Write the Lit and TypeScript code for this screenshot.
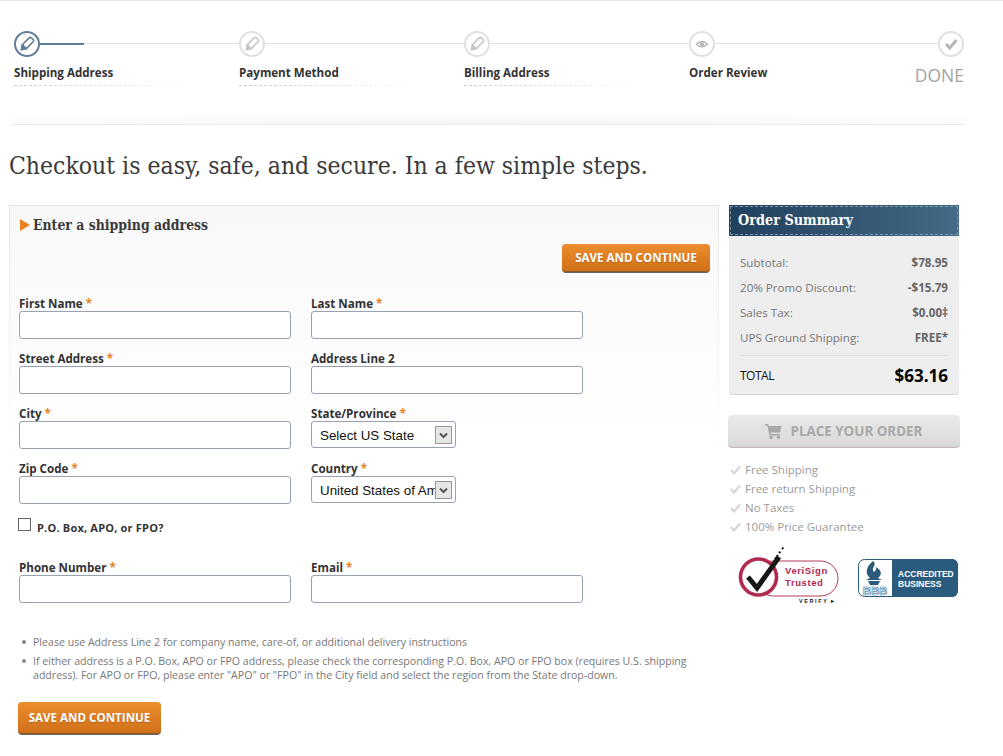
import { LitElement, html, css, svg } from "lit";
import { customElement } from "lit/decorators.js";

const pencil = (c: string) => svg`<g transform="rotate(45 13 13)" fill="none" stroke=${c} stroke-width="1.6">
  <rect x="10.2" y="5.5" width="5.6" height="11.5" rx="1.6"/><path d="M10.2 17 L13 21 L15.8 17 Z" fill=${c}/></g>`;
const eye = (c: string) => svg`<path d="M7.5 13.3 Q13 7.8 18.5 13.3 Q13 18.5 7.5 13.3 Z" fill="none" stroke=${c} stroke-width="1.3"/><circle cx="13" cy="13.2" r="2" fill=${c}/>`;
const checkIcon = (c: string) => svg`<path d="M8 13 L11.7 17 L18.5 9" fill="none" stroke=${c} stroke-width="3"/>`;

@customElement("app-root")
export class AppRoot extends LitElement {
  static styles = css`
    :host { display: block; width: 1003px; height: 756px; overflow: hidden; background: #fff; font-family: "Open Sans", sans-serif; color: #333; }
    .page { border-top: 1px solid #e8e8e8; padding-top: 30px; }
    .steps { display: grid; grid-template-columns: 225px 225px 225px 249px 26px; margin-left: 14px; height: 55px; }
    .step { display: flex; flex-direction: column; min-width: 0; }
    .head { display: flex; align-items: center; height: 26px; }
    .circle { flex: none; display: block; width: 26px; height: 26px; }
    .line { flex: 1; height: 2px; background: linear-gradient(#e0e0e0, #e0e0e0) 0 0 / 100% 1px no-repeat; margin-top: -1px; }
    .line.active { background: linear-gradient(90deg, #5f7d98 0 44px, transparent 44px), linear-gradient(#e0e0e0, #e0e0e0) 0 0 / 100% 1px no-repeat; }
    .label { margin-top: 8px; font-size: 11.6px; font-weight: 700; line-height: 16px; color: #333; white-space: nowrap; }
    .dash { margin-top: 4px; width: 185px; height: 1px; background: repeating-linear-gradient(90deg, #ccc 0 3px, transparent 3px 5px); -webkit-mask-image: linear-gradient(90deg, #000, transparent); mask-image: linear-gradient(90deg, #000, transparent); }
    .last { align-items: flex-end; }
    .done { margin-top: 5px; font-size: 17.5px; line-height: 26px; color: #a3a3a3; white-space: nowrap; }
    .band { margin: 24px 37px 0 11px; height: 14px; border-bottom: 1px solid #ececec; background: radial-gradient(ellipse 70% 100% at 50% 100%, #f5f5f5, #fff); }
    h1 { margin: 25px 0 0 9px; font: 400 24.5px/32px "DejaVu Serif", serif; font-stretch: condensed; color: #3a3a3a; white-space: nowrap; }
    .main { display: grid; grid-template-columns: 710px 230px; gap: 10px; margin: 23px 0 0 9px; }
    .panel { border: 1px solid; border-image: linear-gradient(#e3e3e3, #fff 45%) 1; background: linear-gradient(#f8f8f8, #fff 43%); padding: 9px 8px 0 9px; height: 540px; box-sizing: border-box; }
    h2 { display: flex; align-items: center; gap: 3px; margin: 0 0 0 1px; font: 700 13.9px/20px "DejaVu Serif", serif; font-stretch: condensed; color: #3a3a3a; }
    .tri { width: 0; height: 0; border-left: 10px solid #e8821e; border-top: 6px solid transparent; border-bottom: 6px solid transparent; }
    .bar { display: flex; justify-content: flex-end; margin-top: 9px; margin-bottom: 23px; }
    .btn { display: flex; align-items: center; justify-content: center; box-sizing: border-box; border: 0; padding: 0 0 2px; border-radius: 4px; background: linear-gradient(#ec8d2e, #cf6f18); box-shadow: inset 0 -1px 0 #8a5a2a, 0 1px 0 #666; color: #fff; font: 700 11.6px "Open Sans", sans-serif; text-shadow: 0 1px 1px rgba(0,0,0,.2); }
    .btn.top { width: 148px; height: 28px; }
    .btn.bottom { width: 143px; height: 32px; margin: 20px 0 0 -1px; }
    .grid { display: grid; grid-template-columns: 272px 272px; column-gap: 20px; grid-auto-rows: 44px; row-gap: 11px; }
    .field { display: flex; flex-direction: column; }
    .field label { height: 16px; font-size: 11.6px; font-weight: 700; line-height: 18px; color: #333; white-space: nowrap; }
    .req { color: #e8821e; }
    input.text { box-sizing: border-box; width: 272px; height: 28px; margin: 0; background: #fff; border: 1px solid #98a2b3; border-radius: 3px; }
    .selbox { position: relative; width: 145px; height: 27px; }
    select { box-sizing: border-box; display: block; width: 145px; height: 27px; margin: 0; padding: 1px 20px 0 8px; appearance: none; -webkit-appearance: none; background: #fff; border: 1px solid #98a2b3; border-radius: 3px; font: 13.33px "Liberation Sans", sans-serif; color: #111; }
    .arrow { position: absolute; right: 4px; top: 5px; width: 17px; height: 18px; display: block; }
    .pobox { display: flex; align-items: center; gap: 6px; margin: 14px 0 0 -1px; height: 13px; font-size: 11px; font-weight: 700; color: #333; letter-spacing: .2px; }
    .pobox span { padding-top: 5px; }
    .cb { appearance: none; -webkit-appearance: none; width: 13px; height: 13px; margin: 0; background: #fff; border: 1px solid #666; box-sizing: border-box; flex: none; }
    .grid.phone { margin-top: 28px; }
    ul { list-style: none; margin: 32px 0 0 0; padding: 0 0 0 14px; font-size: 10.6px; line-height: 14px; color: #777; width: 668px; box-sizing: border-box; }
    li { position: relative; margin-bottom: 5px; }
    li::before { content: ""; position: absolute; left: -11px; top: 5px; width: 4px; height: 4px; border-radius: 50%; background: #888; }
    .side { display: flex; flex-direction: column; }
    .sumhead { box-sizing: border-box; height: 31px; display: flex; align-items: center; padding: 0 0 2px 9px; background: linear-gradient(90deg, #20405e, #436a86); outline: 1px dashed #7f97aa; outline-offset: -2px; color: #fff; font: 700 14.3px "DejaVu Serif", serif; font-stretch: condensed; }
    .sumbody { box-sizing: border-box; height: 159px; background: #eee; border-bottom: 1px solid #d9d3d3; border-radius: 0 0 4px 4px; padding: 14px 11px 0 11px; }
    .row { display: flex; justify-content: space-between; align-items: center; height: 25px; font-size: 11.6px; color: #777; }
    .row b { color: #666; }
    .total { display: flex; justify-content: space-between; align-items: center; border-top: 1px solid #e0e0e0; margin-top: 5px; height: 39px; font-size: 12px; letter-spacing: -.5px; color: #111; }
    .total b { font-size: 17px; letter-spacing: 0; color: #000; }
    .place { display: flex; align-items: center; justify-content: center; gap: 9px; box-sizing: border-box; width: 232px; height: 33px; margin: 20px 0 0 -1px; padding-right: 1px; border-radius: 4px; background: linear-gradient(#e9e9e9, #d9d9d9); box-shadow: inset 0 -1px 0 #cfcfcf; border-bottom: 1px solid #c9b9bd; color: #a8a8a8; font-size: 13.4px; font-weight: 700; }
    .perks { margin-top: 12px; }
    .perk { display: flex; align-items: center; gap: 4px; height: 19px; font-size: 11.5px; color: #9b9b9b; margin-left: 1px; }
    .badges { display: flex; gap: 19px; margin: 9px 0 0 9px; }
    .badges svg { display: block; flex: none; }
    .bbb { margin-top: 14px; }
    svg text { font-family: "Liberation Sans", sans-serif; }
  `;

  private circle(active: boolean, icon: unknown) {
    const c = active ? "#5f7d98" : "#e0e0e0";
    return html`<svg class="circle" viewBox="0 0 26 26"><circle cx="13" cy="13" r="12" fill="#fff" stroke=${c} stroke-width="2"/>${icon}</svg>`;
  }

  private field(name: string, req: boolean, control: unknown) {
    return html`<div class="field"><label>${name}${req ? html` <span class="req">*</span>` : ""}</label>${control}</div>`;
  }

  private text(name: string, req = true) {
    return this.field(name, req, html`<input class="text" type="text" />`);
  }

  private select(name: string, value: string) {
    return this.field(name, true, html`<div class="selbox"><select><option>${value}</option></select>
      <svg class="arrow" viewBox="0 0 17 18"><rect x=".5" y=".5" width="16" height="17" fill="#e6e6e6" stroke="#999"/><path d="M5 7.5 L8.5 11 L12 7.5" fill="none" stroke="#555" stroke-width="2"/></svg></div>`);
  }

  render() {
    return html`<div class="page">
      <div class="steps">
        <div class="step"><div class="head">${this.circle(true, pencil("#5f7d98"))}<div class="line active"></div></div><div class="label">Shipping Address</div><div class="dash"></div></div>
        <div class="step"><div class="head">${this.circle(false, pencil("#c9c5c8"))}<div class="line"></div></div><div class="label">Payment Method</div><div class="dash"></div></div>
        <div class="step"><div class="head">${this.circle(false, pencil("#c9c5c8"))}<div class="line"></div></div><div class="label">Billing Address</div><div class="dash"></div></div>
        <div class="step"><div class="head">${this.circle(false, eye("#b5b5b5"))}<div class="line"></div></div><div class="label">Order Review</div></div>
        <div class="step last"><div class="head">${this.circle(false, checkIcon("#b5b5b5"))}</div><div class="done">DONE</div></div>
      </div>
      <div class="band"></div>
      <h1>Checkout is easy, safe, and secure. In a few simple steps.</h1>
      <div class="main">
        <div class="panel">
          <h2><span class="tri"></span>Enter a shipping address</h2>
          <div class="bar"><button class="btn top">SAVE AND CONTINUE</button></div>
          <div class="grid">
            ${this.text("First Name")}${this.text("Last Name")}
            ${this.text("Street Address")}${this.text("Address Line 2", false)}
            ${this.text("City")}${this.select("State/Province", "Select US State")}
            ${this.text("Zip Code")}${this.select("Country", "United States of America")}
          </div>
          <div class="pobox"><input class="cb" type="checkbox" /><span>P.O. Box, APO, or FPO?</span></div>
          <div class="grid phone">${this.text("Phone Number")}${this.text("Email")}</div>
          <ul>
            <li>Please use Address Line 2 for company name, care-of, or additional delivery instructions</li>
            <li>If either address is a P.O. Box, APO or FPO address, please check the corresponding P.O. Box, APO or FPO box (requires U.S. shipping address). For APO or FPO, please enter "APO" or "FPO" in the City field and select the region from the State drop-down.</li>
          </ul>
          <button class="btn bottom">SAVE AND CONTINUE</button>
        </div>
        <div class="side">
          <div class="sumhead">Order Summary</div>
          <div class="sumbody">
            <div class="row"><span>Subtotal:</span><b>$78.95</b></div>
            <div class="row"><span>20% Promo Discount:</span><b>-$15.79</b></div>
            <div class="row"><span>Sales Tax:</span><b>$0.00‡</b></div>
            <div class="row"><span>UPS Ground Shipping:</span><b>FREE*</b></div>
            <div class="total"><span>TOTAL</span><b>$63.16</b></div>
          </div>
          <div class="place">
            <svg width="17" height="16" viewBox="0 0 17 16"><path d="M0 1 H3 L4 3 H16.5 L15 9.5 H5.5 L5.8 11 H15 V12.5 H4.5 L2.3 2.5 H0 Z" fill="#a8a8a8"/><circle cx="6" cy="14.3" r="1.7" fill="#a8a8a8"/><circle cx="13.5" cy="14.3" r="1.7" fill="#a8a8a8"/></svg>
            PLACE YOUR ORDER
          </div>
          <div class="perks">
            ${["Free Shipping", "Free return Shipping", "No Taxes", "100% Price Guarantee"].map(
              (t) => html`<div class="perk"><svg width="11" height="10" viewBox="0 0 11 10"><path d="M1 5 L4 8.5 L10 1.5" fill="none" stroke="#d6d6d6" stroke-width="2.2"/></svg>${t}</div>`
            )}
          </div>
          <div class="badges">
            <svg width="101" height="60" viewBox="0 0 101 60">
              <rect x="18" y="16" width="82" height="35" rx="17.5" fill="#fff" stroke="#b5385a" stroke-width="1"/>
              <circle cx="20.5" cy="32" r="18" fill="#fff" stroke="#b32a50" stroke-width="3.6"/>
              <path d="M10 32 L19 43 L41 12" fill="none" stroke="#161616" stroke-width="5"/>
              <path d="M37 14 L40 10 M41 8 L43 6 M44 4 L46 2" stroke="#161616" stroke-width="2" stroke-dasharray="2 1"/>
              <text x="47" y="29" font-size="9.5" font-weight="700" fill="#b32a50" letter-spacing=".6">VeriSign</text>
              <text x="47" y="41" font-size="9.5" font-weight="700" fill="#b32a50" letter-spacing=".6">Trusted</text>
              <text x="61" y="58" font-size="5.5" font-weight="700" fill="#222" letter-spacing="1.6">VERIFY ▸</text>
            </svg>
            <svg class="bbb" width="100" height="38" viewBox="0 0 100 38">
              <rect x=".5" y=".5" width="99" height="37" rx="6" fill="#fff" stroke="#2a5a7c"/>
              <path d="M34 0 H94 A6 6 0 0 1 100 6 V32 A6 6 0 0 1 94 38 H34 Z" fill="#2a5a7c"/>
              <path d="M15 2 C20 6 12 9 16 13 C19 11 18 9 18 8 C23 11 25 15 20 19 L24 21 H8 L12 19 C6 14 9 7 15 2 Z M10 22 H22 L20 26 H12 Z" fill="#2a5a7c"/>
              <text x="5" y="36" font-size="11" font-weight="700" fill="#fff" stroke="#2a5a7c" stroke-width=".6" letter-spacing=".2">BBB</text>
              <text x="40" y="18" font-size="8.5" font-weight="700" fill="#fff">ACCREDITED</text>
              <text x="40" y="28" font-size="8.5" font-weight="700" fill="#fff">BUSINESS</text>
            </svg>
          </div>
        </div>
      </div>
    </div>`;
  }
}
